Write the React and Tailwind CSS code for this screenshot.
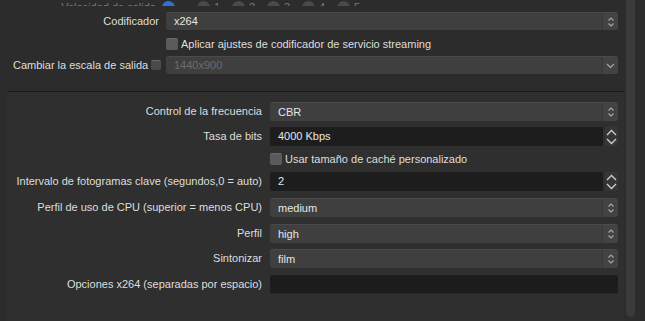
import React from 'react';

function SelectChevrons() {
  return (
    <svg width="8" height="12" viewBox="0 0 8 12" fill="none" stroke="#a8a8a8" strokeWidth="1.1">
      <path d="M1.5 4.5 L4 2 L6.5 4.5" />
      <path d="M1.5 7.5 L4 10 L6.5 7.5" />
    </svg>
  );
}

function ChevronDown() {
  return (
    <svg width="9" height="6" viewBox="0 0 9 6" fill="none" stroke="#a8a8a8" strokeWidth="1.2">
      <path d="M1 1 L4.5 4.5 L8 1" />
    </svg>
  );
}

function Select({ value, disabled, down }) {
  return (
    <div className="flex-1 h-full flex rounded-[3px] bg-[#3f3f3f] border-t border-[#4a4a4a] overflow-hidden">
      <div className={`flex-1 flex items-center pl-2 ${disabled ? 'text-[#6c6c6c]' : 'text-[#e6e6e6]'}`}>
        {value}
      </div>
      <div className="w-[16px] flex items-center justify-center bg-[#434343] border-l border-[#383838]">
        {down ? <ChevronDown /> : <SelectChevrons />}
      </div>
    </div>
  );
}

function Spin({ value }) {
  return (
    <div className="flex-1 h-full flex gap-[2px]">
      <div className="flex-1 flex items-center pl-2 rounded-[2px] bg-[#1d1d1d] text-[#e6e6e6]">{value}</div>
      <div className="w-[13px] flex flex-col items-center justify-center gap-[2px] bg-[#363636] rounded-[2px]">
        <svg width="11" height="7" viewBox="0 0 11 7" fill="none" stroke="#d0d0d0" strokeWidth="1.3">
          <path d="M1 6 L5.5 1.5 L10 6" />
        </svg>
        <svg width="11" height="7" viewBox="0 0 11 7" fill="none" stroke="#d0d0d0" strokeWidth="1.3">
          <path d="M1 1 L5.5 5.5 L10 1" />
        </svg>
      </div>
    </div>
  );
}

function Check({ size = 'w-[12px] h-[12px]', dim }) {
  return (
    <div className={`${size} rounded-[2px] ${dim ? 'bg-[#4a4a4a]' : 'bg-[#5b5b5b]'} border-t border-[#6a6a6a]`} />
  );
}

function Row({ label, children, className = '' }) {
  return (
    <div className={`flex items-center h-[19px] ${className}`}>
      <div className="w-[263px] pr-[8px] text-right text-[#dedede] whitespace-nowrap">{label}</div>
      {children}
    </div>
  );
}

export default function App() {
  return (
    <div
      className="w-[645px] h-[321px] overflow-hidden bg-[#2c2c2c] flex text-[11px] leading-none"
      style={{ fontFamily: '"Liberation Sans", Arial, sans-serif' }}
    >
      <div className="w-[624px] flex flex-col">
        {/* partially visible radio row */}
        <div className="h-[6px] overflow-hidden flex items-end">
          <div className="flex items-center -mb-[8px] h-[14px]">
            <div className="w-[162px] pr-[6px] text-right text-[#7a7a7a]">Velocidad de salida</div>
            <div className="w-[13px] h-[13px] rounded-full bg-[#2f6fdc]" />
            <div className="ml-[22px] w-[13px] h-[13px] rounded-full bg-[#4a4a4a]" />
            <div className="ml-[4px] w-[8px] text-[#7a7a7a]">1</div>
            <div className="ml-[10px] w-[13px] h-[13px] rounded-full bg-[#4a4a4a]" />
            <div className="ml-[4px] w-[8px] text-[#7a7a7a]">2</div>
            <div className="ml-[10px] w-[13px] h-[13px] rounded-full bg-[#4a4a4a]" />
            <div className="ml-[4px] w-[8px] text-[#7a7a7a]">3</div>
            <div className="ml-[10px] w-[13px] h-[13px] rounded-full bg-[#4a4a4a]" />
            <div className="ml-[4px] w-[8px] text-[#7a7a7a]">4</div>
            <div className="ml-[10px] w-[13px] h-[13px] rounded-full bg-[#4a4a4a]" />
            <div className="ml-[4px] w-[8px] text-[#7a7a7a]">5</div>
          </div>
        </div>

        {/* encoder section */}
        <div className="pr-[6px] flex flex-col">
          <div className="flex items-center h-[18px] mt-[6px]">
            <div className="w-[166px] pr-[7px] text-right text-[#dedede]">Codificador</div>
            <Select value="x264" />
          </div>
          <div className="flex items-center h-[18px] mt-[5px] pl-[166px]">
            <Check />
            <span className="ml-[3px] text-[#dedede]">Aplicar ajustes de codificador de servicio streaming</span>
          </div>
          <div className="flex items-center h-[18px] mt-[3px]">
            <div className="w-[166px] pl-[13px] flex items-center text-[#dedede] whitespace-nowrap">
              <span>Cambiar la escala de salida</span>
              <div className="ml-[3px]">
                <Check size="w-[10px] h-[10px]" dim />
              </div>
            </div>
            <Select value="1440x900" disabled down />
          </div>
        </div>

        {/* group box */}
        <div className="mt-[17px] ml-[7px] flex-1 bg-[#2f2f2f] border-t border-[#1a1a1a] pr-[6px] flex flex-col">
          <Row label="Control de la frecuencia" className="mt-[10px]">
            <Select value="CBR" />
          </Row>
          <Row label="Tasa de bits" className="mt-[6px]">
            <Spin value="4000 Kbps" />
          </Row>
          <div className="flex items-center h-[14px] mt-[6px] pl-[263px]">
            <Check />
            <span className="ml-[3px] text-[#dedede]">Usar tamaño de caché personalizado</span>
          </div>
          <Row label="Intervalo de fotogramas clave (segundos,0 = auto)" className="mt-[6px]">
            <Spin value="2" />
          </Row>
          <Row label="Perfil de uso de CPU (superior = menos CPU)" className="mt-[7px]">
            <Select value="medium" />
          </Row>
          <Row label="Perfil" className="mt-[7px]">
            <Select value="high" />
          </Row>
          <Row label="Sintonizar" className="mt-[6px]">
            <Select value="film" />
          </Row>
          <Row label="Opciones x264 (separadas por espacio)" className="mt-[7px]">
            <div className="flex-1 h-full rounded-[3px] bg-[#1c1c1c] border-b border-[#262626]" />
          </Row>
        </div>
      </div>

      {/* scrollbar */}
      <div className="ml-[2px] w-[9px] h-[317px] rounded-b-full bg-[#3a3a3a]" />
    </div>
  );
}
